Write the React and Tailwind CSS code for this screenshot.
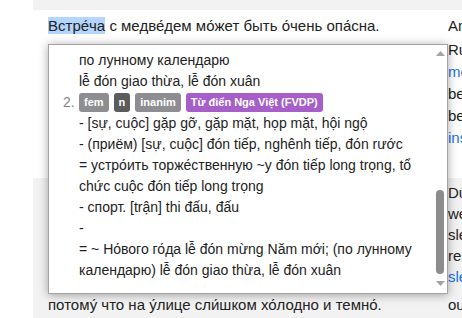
import React from 'react'

const topLines = [
  'по лунному календарю',
  'lễ đón giao thừa, lễ đón xuân',
]

const senseLines = [
  '- [sự, cuộc] gặp gỡ, gặp mặt, họp mặt, hội ngộ',
  '- (приём) [sự, cuộc] đón tiếp, nghênh tiếp, đón rước',
  '= устро́ить торже́ственную ~у đón tiếp long trọng, tổ',
  'chức cuộc đón tiếp long trọng',
  '- спорт. [trận] thi đấu, đấu',
  '-',
  '= ~ Но́вого го́да lễ đón mừng Năm mới; (по лунному',
  'календарю) lễ đón giao thừa, lễ đón xuân',
]

const badges = [
  { label: 'fem', cls: 'bg-[#8e8e92]' },
  { label: 'n', cls: 'bg-[#5c5c5c]' },
  { label: 'inanim', cls: 'bg-[#8e8e92]' },
  { label: 'Từ điển Nga Việt (FVDP)', cls: 'bg-[#a65fc9]' },
]

function Popup() {
  return (
    <div className="absolute left-[48px] top-[44px] w-[400px] h-[250px] bg-white border border-[#a3a3a3] shadow-[0_1px_9px_rgba(0,0,0,0.35)] overflow-hidden">
      <div className="pt-[5px] pl-[30px] pr-[12px] text-[14px] leading-[21px] text-[#222] whitespace-nowrap">
        {topLines.map((l, i) => (
          <div key={i}>{l}</div>
        ))}
        <div className="relative flex items-center gap-[5px] h-[21px]">
          <span className="absolute -left-[16px] text-[#888]">2.</span>
          {badges.map(b => (
            <span key={b.label} className={`${b.cls} text-white text-[11px] font-bold leading-[19px] px-[5px] rounded-[3px]`}>
              {b.label}
            </span>
          ))}
        </div>
        {senseLines.map((l, i) => (
          <div key={i}>{l}</div>
        ))}
      </div>

      {/* scrollbar */}
      <div className="absolute right-0 top-0 bottom-0 w-[14px] flex flex-col items-center bg-white">
        <svg width="9" height="5" viewBox="0 0 9 5" className="mt-[6px]">
          <polygon points="0,5 9,5 4.5,0" fill="#a3a3a3" />
        </svg>
        <div className="flex-1" />
        <div className="w-[8px] h-[84px] rounded-full bg-[#8c8c8c] mb-[7px]" />
        <svg width="9" height="5" viewBox="0 0 9 5" className="mb-[7px]">
          <polygon points="0,0 9,0 4.5,5" fill="#a3a3a3" />
        </svg>
      </div>
    </div>
  )
}

export default function App() {
  return (
    <div className="relative w-[462px] h-[318px] overflow-hidden bg-white text-[15px] text-[#222]" style={{ fontFamily: '"Liberation Sans", Arial, sans-serif' }}>
      <div className="ml-[33px] w-[700px]">
        <div className="h-[10px] bg-[#f2f2f2]" />

        {/* white row */}
        <div className="flex h-[168px] bg-white">
          <div className="w-[415px] shrink-0 pl-[15px] pt-[5px] leading-[22px]">
            <div className="whitespace-nowrap">
              <span className="bg-[#b4d5fe]">Встре́ча</span> с медве́дем мо́жет быть о́чень опа́сна.
            </div>
            <div className="whitespace-nowrap mt-[3px]">
              Медве́дь — о́чень си́льный и бы́стрый зве́рь, <span className="text-[#1a73e8]">ле́с</span>
            </div>
          </div>
          <div className="w-[200px] shrink-0 pt-[5px] leading-[22px] whitespace-nowrap">
            <div>Anki</div>
            <div className="mt-[2px]">Russian</div>
            <div className="text-[#1a73e8]">meeting</div>
            <div>bear</div>
            <div>be</div>
            <div className="text-[#1a73e8]">instead</div>
          </div>
        </div>

        {/* grey row */}
        <div className="flex h-[140px] bg-[#f2f2f2]">
          <div className="w-[415px] shrink-0 pl-[15px] pt-[6px] leading-[22px] whitespace-nowrap">
            <div>Зимо́й медве́ди спят в берло́ге,</div>
            <div>а весно́й они́ просыпа́ются.</div>
            <div>Мы не пошли́ гуля́ть в лес,</div>
            <div>мы оста́лись до́ма,</div>
            <div>и пи́ли чай,</div>
            <div>потому́ что на у́лице сли́шком хо́лодно и темно́.</div>
          </div>
          <div className="w-[200px] shrink-0 pt-[4px] leading-[21px] whitespace-nowrap">
            <div>During</div>
            <div>wear</div>
            <div>sleep</div>
            <div>rest</div>
            <div className="text-[#1a73e8]">sleep</div>
            <div className="mt-[7px]">out</div>
          </div>
        </div>
      </div>

      <Popup />
    </div>
  )
}
